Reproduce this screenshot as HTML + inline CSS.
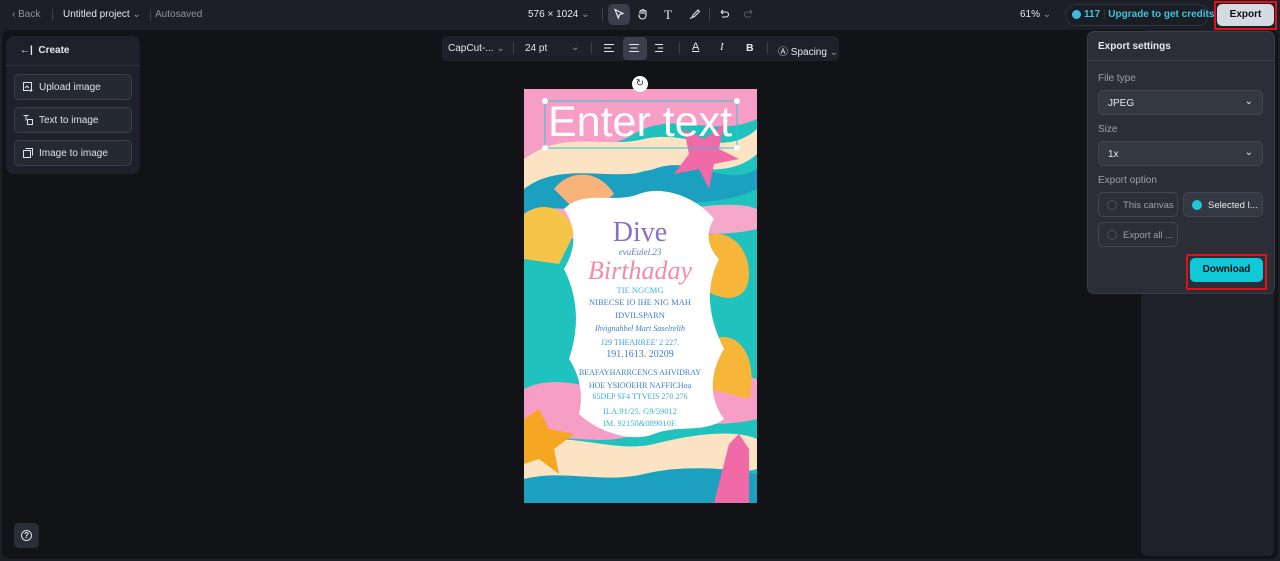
<!DOCTYPE html>
<html><head><meta charset="utf-8"><style>
*{box-sizing:border-box;margin:0;padding:0}
body{width:1280px;height:561px;overflow:hidden;background:#1c1f26;font-family:"Liberation Sans",sans-serif;color:#e6e8ec;position:relative;font-size:10px}
.abs{position:absolute}
.stage{left:2px;top:30px;width:1276px;height:529px;background:#111317;border-radius:8px}
.t{position:absolute;white-space:nowrap}
.panel{background:#1e2129;border-radius:8px}
.btn{position:absolute;left:14px;width:118px;height:26px;border:1px solid #3a3f4b;background:#252932;border-radius:5px;font-size:10px;color:#dfe2e7;padding:7px 0 0 24px}
.btn svg{position:absolute;left:7px;top:6px}
.sel{position:absolute;left:1098px;width:165px;height:25px;background:#343843;border:1px solid #414653;border-radius:5px;font-size:10px;padding:7px 0 0 9px;color:#e6e8ec}
.lbl{position:absolute;left:1098px;font-size:10px;color:#9aa0ab}
.opt{position:absolute;height:25px;border:1px solid #414653;border-radius:5px;font-size:9.5px;color:#9aa0ab;padding:7px 0 0 24px}
.opt i{position:absolute;left:8px;top:7px;width:10px;height:10px;border-radius:50%;border:1px solid #4a505c}
</style></head><body>
<div class="abs stage"></div>
<div class="t" style="left:12px;top:9px;font-size:10px;color:#8d939e">‹ Back</div>
<div class="abs" style="left:52px;top:9px;width:1px;height:12px;background:#3a3f4b"></div>
<div class="t" style="left:63px;top:9px;font-size:10px;color:#e6e8ec">Untitled project <span style="color:#8d939e">⌄</span></div>
<div class="abs" style="left:150px;top:9px;width:1px;height:12px;background:#3a3f4b"></div>
<div class="t" style="left:155px;top:9px;font-size:10px;color:#8d939e">Autosaved</div>
<div class="t" style="left:528px;top:9px;font-size:10px;color:#e6e8ec">576 × 1024 <span style="color:#8d939e">⌄</span></div>
<div class="abs" style="left:602px;top:8px;width:1px;height:14px;background:#3a3f4b"></div>
<div class="abs" style="left:608px;top:4px;width:22px;height:21px;background:#3a3f4b;border-radius:5px"></div>
<svg class="abs" style="left:613px;top:8px" width="12" height="12" viewBox="0 0 12 12" fill="none" stroke="#e6e8ec" stroke-width="1.2"><path d="M2 1.5l8 4-3.5 1-1.2 3.5z"/></svg>
<svg class="abs" style="left:637px;top:8px" width="12" height="12" viewBox="0 0 12 12" fill="none" stroke="#e6e8ec" stroke-width="1.1"><path d="M3 6V3.5a1 1 0 012 0V6M5 5V2.5a1 1 0 012 0V6M7 5V3.5a1 1 0 012 0V7.5a3.5 3.5 0 01-7 0V6.5"/></svg>
<div class="t" style="left:664px;top:7px;font-size:13px;color:#e6e8ec;font-family:'Liberation Serif',serif">T</div>
<svg class="abs" style="left:688px;top:8px" width="12" height="12" viewBox="0 0 12 12" fill="none" stroke="#e6e8ec" stroke-width="1.1"><path d="M10 2L5 7l-1 2.5 2.5-1L11.5 3.5zM2 10.5l2-1"/></svg>
<div class="abs" style="left:709px;top:8px;width:1px;height:14px;background:#3a3f4b"></div>
<svg class="abs" style="left:718px;top:8px" width="12" height="12" viewBox="0 0 12 12" fill="none" stroke="#e6e8ec" stroke-width="1.1"><path d="M3 4h5a2.5 2.5 0 010 5H4M3 4l2-2M3 4l2 2"/></svg>
<svg class="abs" style="left:743px;top:8px" width="12" height="12" viewBox="0 0 12 12" fill="none" stroke="#555b66" stroke-width="1.1"><path d="M9 4H4a2.5 2.5 0 000 5h4M9 4L7 2M9 4L7 6"/></svg>
<div class="t" style="left:1020px;top:9px;font-size:10px;color:#e6e8ec">61% <span style="color:#8d939e">⌄</span></div>
<div class="abs" style="left:1065px;top:4px;width:144px;height:22px;border:1px solid #2f3440;border-radius:11px;background:#1a1d24"></div>
<div class="abs" style="left:1072px;top:10px;width:9px;height:9px;border-radius:50%;background:#3fb8e0"></div>
<div class="t" style="left:1084px;top:9px;font-size:10px;font-weight:bold;color:#3fc4dd">117 <span style="color:#3a3f4b;font-weight:normal">|</span> Upgrade to get credits</div>
<div class="abs" style="left:1214px;top:1px;width:63px;height:29px;border:2px solid #e0111b"></div>
<div class="abs" style="left:1217px;top:4px;width:57px;height:22px;background:#d4dbe2;border-radius:5px;color:#111;font-size:10px;font-weight:bold;text-align:center;padding-top:5px">Export</div>
<div class="abs panel" style="left:6px;top:36px;width:134px;height:138px"></div>
<div class="abs" style="left:6px;top:65px;width:134px;height:1px;background:#2d313b"></div>
<div class="t" style="left:20px;top:45px;font-size:10px;font-weight:bold">←|&nbsp; Create</div>
<div class="btn" style="top:74px"><svg width="12" height="12" viewBox="0 0 12 12" fill="none" stroke="#dfe2e7" stroke-width="1"><rect x="1.5" y="1.5" width="8" height="8"/><path d="M3 7l2-2 2 2M9 8v3M7.5 9.5h3"/></svg>Upload image</div>
<div class="btn" style="top:107px"><svg width="12" height="12" viewBox="0 0 12 12" fill="none" stroke="#dfe2e7" stroke-width="1"><path d="M1.5 1.5h5M4 1.5v5M5.5 5.5h5v5h-5z"/></svg>Text to image</div>
<div class="btn" style="top:140px"><svg width="12" height="12" viewBox="0 0 12 12" fill="none" stroke="#dfe2e7" stroke-width="1"><rect x="1.5" y="3.5" width="7" height="7"/><path d="M3.5 1.5h7v7"/></svg>Image to image</div>
<div class="abs" style="left:14px;top:523px;width:25px;height:25px;background:#2a2e37;border-radius:5px"></div>
<div class="abs" style="left:21px;top:530px;width:11px;height:11px;border:1.2px solid #dfe2e7;border-radius:50%;font-size:8px;text-align:center;line-height:9px;font-weight:bold">?</div>
<div class="abs" style="left:442px;top:36px;width:397px;height:25px;background:#1e2129;border-radius:5px"></div>
<div class="t" style="left:448px;top:43px;font-size:10px">CapCut-... <span style="color:#8d939e">⌄</span></div>
<div class="abs" style="left:513px;top:42px;width:1px;height:12px;background:#3a3f4b"></div>
<div class="t" style="left:525px;top:43px;font-size:10px">24 pt</div>
<div class="t" style="left:571px;top:42px;font-size:10px;color:#8d939e">⌄</div>
<div class="abs" style="left:591px;top:42px;width:1px;height:12px;background:#3a3f4b"></div>
<div class="abs" style="left:623px;top:37px;width:24px;height:23px;background:#3a3f4b;border-radius:4px"></div>
<svg class="abs" style="left:603px;top:43px" width="60" height="11" fill="none" stroke="#e6e8ec" stroke-width="1.1"><path d="M1 1.5h10M1 5h7M1 8.5h10M26 1.5h10M27.5 5h7M26 8.5h10M52 1.5h10M55 5h7M52 8.5h10"/></svg>
<div class="abs" style="left:679px;top:42px;width:1px;height:12px;background:#3a3f4b"></div>
<div class="t" style="left:692px;top:41px;font-size:11px;text-decoration:underline">A</div>
<div class="t" style="left:720px;top:41px;font-size:11px;font-style:italic;font-family:'Liberation Serif',serif">I</div>
<div class="t" style="left:746px;top:42px;font-size:10.5px;font-weight:bold">B</div>
<div class="abs" style="left:767px;top:42px;width:1px;height:12px;background:#3a3f4b"></div>
<div class="t" style="left:778px;top:43px;font-size:10px">Ⓐ Spacing <span style="color:#8d939e">⌄</span></div>
<svg class="abs" style="left:524px;top:89px" width="233" height="414" viewBox="0 0 233 414">
<rect width="233" height="414" fill="#1fc2bd"/>
<path d="M0 0h233v30C190 50 150 20 110 45S40 40 0 70z" fill="#f79ec6"/>
<path d="M0 70C40 40 80 60 120 50S200 70 233 40v25C200 95 150 70 110 85S40 70 0 100z" fill="#fbe3c4"/>
<path d="M0 100C40 70 90 95 130 80S200 100 233 80v20C190 120 150 110 100 120S30 110 0 125z" fill="#1ba0bf"/>
<path d="M0 125c30-15 80 5 120 0s90-15 113-5v20c-40 10-80 0-120 10S30 140 0 150z" fill="#f5a7c8"/>
<path d="M0 300c40-20 80 10 120 0s80-20 113-10v40c-40 10-80 0-120 15S30 340 0 355z" fill="#f79ec6"/>
<path d="M0 355c40-15 90 10 130 0s80-15 103-5v30c-40 10-90-5-130 10S30 385 0 390z" fill="#fbe3c4"/>
<path d="M0 390c40-10 80 5 120-5s90-5 113 0v29H0z" fill="#1ba0bf"/>
<path d="M160 40l20 10 20-15-5 25 20 10-25 5-5 25-10-20-25 5 15-20z" fill="#f06aa8"/>
<path d="M30 100c15-20 45-20 60 5l-30 25z" fill="#f7b37a"/>
<path d="M0 125c20-15 45-5 50 20l-15 30-35-5z" fill="#f7c44a"/>
<path d="M175 150c25-15 50 5 50 35s-30 30-50 10z" fill="#f7b53a"/>
<path d="M190 250c25-10 45 20 35 60l-40-10z" fill="#f7b53a"/>
<path d="M0 330l15-10 10 20 25 5-20 15 5 25-20-15-15 5z" fill="#f5a623"/>
<path d="M205 355l10-10 10 15v54h-35z" fill="#f06aa8"/>
<path d="M40 120c20-20 50-5 75-15s60 5 75 25c-10 15-5 30 5 40-15 30-10 60 5 90-15 25-15 50 0 70-20 15-45 5-70 15s-60-5-75-20c5-20 0-40-10-55 10-30 10-60-5-90 15-25 10-45 0-60z" fill="#fff"/>
<g font-family="Liberation Serif,serif" text-anchor="middle">
<text x="116" y="152" font-size="28" fill="#8a6fc6">Dive</text>
<text x="116" y="166" font-size="9" fill="#5a7fc0" font-style="italic">evuEulel.23</text>
<text x="116" y="190" font-size="26" fill="#f48aa8" font-style="italic">Birthaday</text>
<text x="116" y="204" font-size="8.5" fill="#40b5d8">TIE NGCMG</text>
<text x="116" y="216" font-size="8.5" fill="#3f7ec6">NIBECSE IO IHE NIG MAH</text>
<text x="116" y="229" font-size="8.5" fill="#3f7ec6">IDVILSPARN</text>
<text x="116" y="242" font-size="8" fill="#3f7ec6" font-style="italic">Ihvignahbel Mart Saselrelih</text>
<text x="116" y="256" font-size="8" fill="#3f9fd8">J29 THEARREE' 2 227.</text>
<text x="116" y="268" font-size="10" fill="#3f7ec6">191.1613. 20209</text>
<text x="116" y="286" font-size="8" fill="#3f7ec6">BEAFAYHARRCENCS AHVIDRAY</text>
<text x="116" y="299" font-size="8" fill="#3f7ec6">HOE YSIOOEHR NAFFICHoa</text>
<text x="116" y="310" font-size="8" fill="#3fa7d8">65DEP SF4 TTVEIS 270 276</text>
<text x="116" y="325" font-size="8.5" fill="#3fb5c8">ILA.91/25. G9/59012</text>
<text x="116" y="337" font-size="8.5" fill="#3fb5c8">IM. 92150&amp;089010F.</text>
</g>
<text x="116" y="47" text-anchor="middle" font-family="Liberation Sans,sans-serif" font-size="43" fill="#fff">Enter text</text>
<rect x="21" y="12" width="192" height="47" fill="none" stroke="#2bc5d8" stroke-width="1"/>
<circle cx="21" cy="12" r="3" fill="#fff"/><circle cx="213" cy="12" r="3" fill="#fff"/><circle cx="21" cy="59" r="3" fill="#fff"/><circle cx="213" cy="59" r="3" fill="#fff"/>
</svg>
<div class="abs" style="left:632px;top:76px;width:16px;height:16px;border-radius:50%;background:#fff;color:#333;font-size:10px;text-align:center;line-height:16px">↻</div>
<div class="abs" style="left:1141px;top:30px;width:133px;height:526px;background:#1f2129;border-radius:6px"></div>
<div class="abs" style="left:1087px;top:31px;width:188px;height:263px;background:#2b2e37;border:1px solid #3a3e49;border-radius:7px"></div>
<div class="abs" style="left:1087px;top:60px;width:188px;height:1px;background:#3a3e49"></div>
<div class="t" style="left:1098px;top:41px;font-size:10px;font-weight:bold">Export settings</div>
<div class="lbl" style="top:73px">File type</div>
<div class="sel" style="top:90px">JPEG<span style="position:absolute;right:9px;top:5px">⌄</span></div>
<div class="lbl" style="top:124px">Size</div>
<div class="sel" style="top:141px">1x<span style="position:absolute;right:9px;top:5px">⌄</span></div>
<div class="lbl" style="top:175px">Export option</div>
<div class="opt" style="left:1098px;top:192px;width:80px"><i></i>This canvas</div>
<div class="opt" style="left:1183px;top:192px;width:80px;background:#343843;color:#e6e8ec"><i style="background:#1fc8d8;border-color:#1fc8d8"></i>Selected l...</div>
<div class="opt" style="left:1098px;top:222px;width:80px"><i></i>Export all ...</div>
<div class="abs" style="left:1186px;top:254px;width:81px;height:36px;border:2px solid #e0111b"></div>
<div class="abs" style="left:1190px;top:258px;width:73px;height:24px;background:#10c8d8;border-radius:5px;color:#111;font-size:10px;font-weight:bold;text-align:center;padding-top:6px">Download</div>
</body></html>
